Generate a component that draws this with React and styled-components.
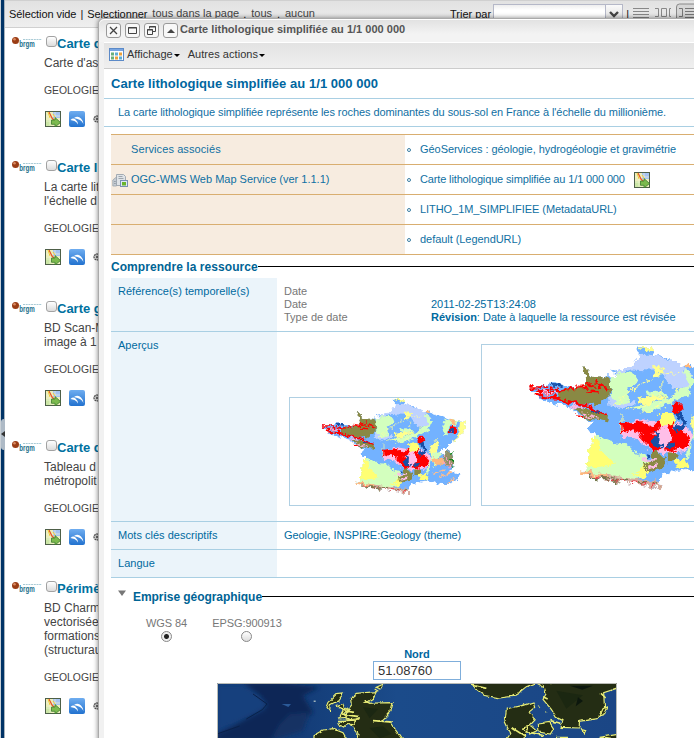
import React from 'react';
import styled, { createGlobalStyle } from 'styled-components';

const Global = createGlobalStyle`
  * { box-sizing: border-box; }
  body { margin: 0; background: #fff; overflow: hidden; font: 11px/13px "Liberation Sans", Arial, sans-serif; color: #444; }
  svg { display: block; flex: none; }
`;

const Screen = styled.div`
  position: relative; width: 694px; height: 738px; overflow: hidden; display: flex; background: #fff;
`;
const Splitter = styled.div`
  width: 5px; flex: none; display: flex; align-items: center; padding-top: 130px;
  background: linear-gradient(to right, #c9d0d6 1px, #003366 1px, #003366 4px, #a9b4bd 4px);
`;
const Handle = styled.div`
  width: 4px; height: 31px; margin-left: 1px; background: #aebac6; border-radius: 3px 0 0 3px;
  display: flex; align-items: center; z-index: 1;
`;
const Results = styled.div`flex: 1; min-width: 0; display: flex; flex-direction: column;`;
const TopBar = styled.div`
  height: 28px; flex: none; display: flex; align-items: flex-start; white-space: nowrap; color: #111;
  background: linear-gradient(#e2e2e2, #efefef); border-top: 1px solid #d0d0d0; border-bottom: 1px solid #d0d0d0;
  padding: 7px 0 0 4px;
`;
const BarText = styled.span`
  margin-left: ${p => p.$gap || 0}px; margin-top: ${p => (p.$link ? -1 : 0)}px; color: ${p => (p.$link ? '#444' : '#111')};
  letter-spacing: ${p => (p.$link ? 0 : -0.08)}px;
`;
const SortLabel = styled.span`margin-left: auto;`;
const Combo = styled.div`
  width: 130px; height: 22px; margin: -4px 3px 0 2px; border: 1px solid #b5b8c8; display: flex; justify-content: flex-end;
  background: linear-gradient(#eee, #fff 5px);
`;
const ComboButton = styled.div`width: 17px; border-left: 1px solid #b5b8c8; background: linear-gradient(#fafafa, #d5d5d5); padding: 5px 0 0 3px;`;
const ViewModes = styled.div`display: flex; margin: -5px 0 0 4px; gap: 5px; width: 61px; overflow: hidden;`;

const ResultList = styled.div`width: 100px; padding-top: 8px;`;
const Item = styled.div`height: ${p => p.$h}px; padding-left: 7px; display: flex; align-items: flex-start;`;
const ItemBody = styled.div`margin-left: 1px; white-space: nowrap;`;
const ItemTitle = styled.div`display: flex; height: 15px; font: bold 13px/15px "Liberation Sans", Arial, sans-serif; color: #0071a0;`;
const CheckBox = styled.div`
  width: 11px; height: 11px; margin: 0 0 0 2px; border: 1px solid #a2a2a2; border-radius: 3px;
  background: linear-gradient(#fff, #dcdcdc);
`;
const ItemText = styled.div`font-size: 12px; line-height: 14px; margin-top: 5px; white-space: pre;`;
const Category = styled.div`font-size: 10.4px; line-height: 13px; margin-top: 14px;`;
const ItemIcons = styled.div`display: flex; align-items: center; gap: 8px; margin: 14px 0 0 1px;`;

const Panel = styled.div`
  position: absolute; left: 98px; top: 18px; width: 640px; height: 760px; color: #0066a0;
  border: 1px solid #aaa; border-radius: 6px 0 0 0; background: #f1f1f1; box-shadow: 0 0 5px rgba(0,0,0,.5);
  padding-left: 5px; display: flex; flex-direction: column;
`;
const PanelHeader = styled.div`
  height: 23px; margin-left: -5px; flex: none; display: flex; align-items: flex-start; gap: 4px; padding: 3px 0 0 7px;
  border-top: 1px solid #fff; border-radius: 6px 0 0 0; background: linear-gradient(#e2e2e2, #f3f3f3 14px); font-weight: bold; color: #555;
`;
const ToolButton = styled.div`
  width: 15px; height: 15px; border: 1px solid #999; border-radius: 3px; background: #f8f8f8;
  display: flex; align-items: center; justify-content: center;
`;
const PanelTitle = styled.div`margin-left: -2px; letter-spacing: .02px;`;
const ActionBar = styled.div`
  height: 27px; flex: none; display: flex; align-items: center; border-top: 1px solid #fff; border-bottom: 1px solid #ccc;
  background: linear-gradient(#e3e3e3, #efefef); color: #333; padding: 0 0 3px 5px;
`;
const MenuItem = styled.div`display: flex; align-items: center; gap: 2px; margin: 0 8px 0 3px;`;
const SecondMenu = styled(MenuItem)`margin-left: 0; letter-spacing: .05px;`;
const Caret = styled.i`border: 3px solid transparent; border-top-color: #000; border-bottom: 0; margin-top: 2px; margin-left: -1px;`;
const Body = styled.div`flex: 1; background: #fff; padding-left: 7px;`;
const RecordTitle = styled.h1`
  margin: 0 0 0 -7px; padding-left: 7px; height: 30px; font-size: 13px; line-height: 30px; border-bottom: 1px solid #a9cfe3; letter-spacing: .045px;
`;
const Abstract = styled.p`
  margin: 0 0 7px -7px; padding-left: 14px; height: 28px; line-height: 26px; border-bottom: 1px solid #a9cfe3;
  color: #116fa3; letter-spacing: -.07px; white-space: nowrap;
`;

const Services = styled.div`border-top: 1px solid #d9ae70;`;
const ServiceRow = styled.div`height: 30px; display: flex; border-bottom: 1px solid #d9ae70; color: #0f70a3;`;
const ServiceName = styled.div`width: 294px; background: #f7ece0; display: flex; align-items: center; padding-left: 1px; gap: 3px; letter-spacing: ${p => p.$spacing || 0}px;`;
const IconSlot = styled.div`width: 16px; height: 14px;`;
const ServiceValue = styled.div`display: flex; align-items: center; padding-left: 2px; gap: 9px; letter-spacing: ${p => p.$spacing}px;`;
const Bullet = styled.i`width: 4px; height: 4px; border: 1px solid #3d7fa3; border-radius: 2px; margin-top: 1px;`;

const Section = styled.div`
  display: flex; height: ${p => p.$h}px; line-height: ${p => p.$h + 2}px; font-size: 12px; font-weight: bold; color: #006495;
  padding-left: ${p => p.$indent || 0}px; white-space: nowrap; letter-spacing: ${p => p.$spacing}px;
`;
const SectionArrow = styled.svg`margin: 12px 7px 0 0;`;
const Rule = styled.i`flex: 1; height: 1px; background: #000; margin-top: ${p => p.$top}px;`;
const FieldRow = styled.div`display: flex; height: ${p => p.$h}px; border-bottom: 1px solid #a9cfe3;`;
const FieldLabel = styled.div`width: 166px; flex: none; background: #ebf4fa; padding: 7px; color: #006aa0; letter-spacing: .02px;`;
const FieldValue = styled.div`padding: 7px; color: #006aa0; letter-spacing: ${p => p.$spacing || 0}px;`;
const Pair = styled.div`display: flex;`;
const PairName = styled.div`width: 147px; color: #777; flex: none;`;
const Thumbs = styled.div`display: flex; align-items: flex-end; gap: 10px; padding: 0 0 15px 12px;`;
const Thumb = styled.div`width: ${p => p.$w}px; height: ${p => p.$h}px; border: 1px solid #b0d0e3; flex: none;`;

const Projections = styled.div`display: flex; gap: 25px; color: #777; padding: 3px 0 0 35px; height: 34px;`;
const Choice = styled.div`display: flex; flex-direction: column; align-items: center; gap: 1px; letter-spacing: -.07px;`;
const Radio = styled.i`
  width: 11px; height: 11px; border-radius: 50%; border: 1px solid #888;
  background: ${p => (p.$on ? 'radial-gradient(circle, #222 2px, #eee 3px)' : 'linear-gradient(#fff, #ddd)')};
`;
const Extent = styled.div`width: 400px; margin-left: 106px; display: flex; flex-direction: column; align-items: center;`;
const NorthLabel = styled.b`color: #0066a0; line-height: 13px;`;
const NorthInput = styled.div`width: 88px; height: 19px; border: 1px solid #7faedb; padding-left: 4px; font-size: 13px; line-height: 18px; color: #333; margin-bottom: 3px;`;

function ServiceMapIcon() {
  return (
    <svg width="16" height="16" viewBox="0 0 16 16">
      <rect x=".5" y=".5" width="15" height="15" fill="#eceebb" stroke="#4d5f48" />
      <path d="M8 1h7v6H8z" fill="#a5c3f2" /><path d="M1 9h5v6H1z" fill="#cbe6a6" />
      <path d="M1 5h14M5 1v14M10 1v14M1 10h14" stroke="#f4f4d4" strokeWidth=".7" />
      <path d="M4 1l3 6 3 3" stroke="#e4572f" fill="none" strokeWidth="1.3" /><path d="M3 1l2 6M8 3l2 3" stroke="#f3ca36" />
      <path d="M6.500 9H10V6.500l5.500 5-5.500 4.500v-2.700H6.500z" fill="#7cba4e" stroke="#3b7c2c" strokeWidth=".8" />
    </svg>
  );
}
function GlobeIcon() {
  return (
    <svg width="16" height="16" viewBox="0 0 16 16">
      <defs><linearGradient id="globe" x2="0" y2="1"><stop stopColor="#6fadf0" /><stop offset="1" stopColor="#2272cf" /></linearGradient></defs>
      <rect width="16" height="16" rx="2" fill="url(#globe)" />
      <path d="M1.500 9q2.500-2.500 5-.5 2 1.500 2.500 5-1.500-3-3.500-3.500T1.500 9z" fill="#fff" />
      <path d="M5 7q4-2.500 7 .5 2 2 2.500 5.500-1.500-3-3.500-4T5 7z" fill="#fff" />
    </svg>
  );
}
function GearIcon() {
  return (
    <svg width="8" height="8" viewBox="0 0 8 8">
      <circle cx="4" cy="4" r="3" fill="#ddd" stroke="#555" strokeWidth="1.3" strokeDasharray="2 .6" /><circle cx="4" cy="4" r="1.2" fill="#666" />
    </svg>
  );
}
function BrgmLogo() {
  return (
    <svg width="31" height="16" viewBox="0 0 31 16">
      <circle cx="3.500" cy="4.500" r="3.500" fill="#9a3c14" /><circle cx="2.500" cy="3.300" r="1.300" fill="#d98a60" />
      <path d="M11 3.500h19" stroke="#a9cbd6" strokeDasharray="2 .7" />
      <text x="7.300" y="10.500" fontFamily="Liberation Sans" fontWeight="bold" fontSize="9.500" textLength="15.500" lengthAdjust="spacingAndGlyphs" fill="#1c6f8b">brgm</text>
    </svg>
  );
}
function ServerIcon() {
  return (
    <svg width="16" height="14" viewBox="0 0 16 14">
      <path d="M4.500 1.500h7l2 2v9h-9z" fill="#dfe3e7" stroke="#a3abb3" /><path d="M.8 7l3.700-3v9H.8z" fill="#c6ccd3" stroke="#9aa4ad" strokeWidth=".8" />
      <path d="M6.500 3.500h4M6.500 5.500h5M2 8.500h1.800M2 10.500h1.800" stroke="#8b959e" strokeWidth=".8" /><rect x="8.500" y="7.500" width="7" height="6" fill="#dce8f7" stroke="#7890b2" />
      <rect x="10" y="9" width="4" height="3.500" fill="#69b42d" />
    </svg>
  );
}

const OUTLINE = 'M345 27L375 28 378 42 400 47 430 65 450 57 452 68 490 78 525 92 560 95 548 125 541 140 515 158 482 185 490 193 510 180 521 198 520 215 522 235 512 242 543 253 535 268 500 287 475 280 455 272 425 278 410 275 395 283 388 292 392 308 375 310 340 300 300 295 260 290 240 283 232 276 243 268 248 240 250 207 262 212 245 190 250 180 228 165 215 155 225 152 180 142 140 130 145 122 132 112 120 109 165 104 175 99 215 108 240 104 240 90 228 70 247 70 246 82 262 86 300 85 292 78 335 65 345 50z';

function Geology({ id, width, height, view }) {
  return (
    <svg width={width} height={height} viewBox={view}>
      <defs>
        <filter id={id} x="-5%" y="-5%" width="110%" height="110%" colorInterpolationFilters="sRGB">
          <feTurbulence type="fractalNoise" baseFrequency=".075" numOctaves="4" seed="11" />
          <feDisplacementMap in="SourceGraphic" scale="19" xChannelSelector="R" yChannelSelector="G" />
        </filter>
        <clipPath id={`${id}c`}><path d={OUTLINE} /></clipPath>
      </defs>
      <g filter={`url(#${id})`}>
        <g clipPath={`url(#${id}c)`}>
          <path d={OUTLINE} fill="#73b2ff" />
          <path d="M280 90L345 50 378 42 430 62 452 85 445 108 418 116 390 75 330 72z" fill="#bed2ff" />
          <path d="M285 125L310 122 340 140 310 152 290 145z" fill="#bed2ff" />
          <path d="M345 45L380 44 430 64 448 84 436 108 412 112 410 80 380 62 350 65z" fill="#bed2ff" />
          <path d="M288 85L315 76 335 80 342 98 322 112 330 135 300 142 290 122zM437 72L457 92 446 120 412 140 380 152 350 158 330 148 380 140 420 120 446 105zM495 85L530 92 545 95 510 108 502 135 488 130z" fill="#d3ffbe" />
          <path d="M372 66L388 64 400 78 386 80 388 90 372 92 380 82zM345 130L372 122 400 130 370 142 350 144zM345 22L376 22 377 36 352 32zM545 95L565 90 546 142 520 158 538 130zM455 165L480 148 472 180 460 200 450 185z" fill="#ffff8c" />
          <path d="M360 118L390 112 402 128 380 126z" fill="#d3ffbe" />
          <path d="M244 200L290 215 318 218 340 240 364 248 360 285 325 296 232 284z" fill="#d3ffbe" />
          <path d="M246 200L262 212 272 235 298 260 286 266 240 270zM330 283L350 278 366 256 376 262 355 290z" fill="#ffff73" />
          <path d="M462 190L482 185 476 215 465 235 452 210 450 245 440 250 445 215z" fill="#d3ffbe" />
          <path d="M388 160L410 155 420 170 415 195 405 225 390 210zM418 255L438 250 448 270 420 272z" fill="#ffff73" />
          <path d="M308 185L350 172 388 178 410 190 432 176 452 200 447 235 405 240 375 238 350 215 315 207z" fill="#ffbee8" />
          <path d="M455 210L475 202 500 215 490 224 462 224zM445 57L452 70 435 66zM505 88L530 95 518 102z" fill="#ffb87d" />
          <path d="M222 66L250 66 246 84 278 80 290 100 288 122 266 140 242 143 210 137 180 130 182 115 242 104z" fill="#898944" />
          <path d="M218 150L260 154 286 166 284 176 238 170zM372 235L400 248 392 270 364 278 358 262 372 256zM404 238L424 240 420 255 404 258z" fill="#898944" />
          <path d="M488 190L512 184 524 208 515 235 497 225z" fill="#929266" />
          <path d="M232 276L330 291 390 298 392 312 230 290z" fill="#d8ae9e" />
        </g>
        <g fill="none">
          <path d="M295 145L320 125 350 100 388 82 425 78M320 155L360 145 390 130 390 95M310 160v50M430 110L400 138 350 160M450 172L475 144" stroke="#ffff9c" strokeWidth="2" strokeDasharray="20 4" />
          <path d="M124 108L160 108 190 114 225 108 260 104 285 110M140 117L175 120M240 114L270 117" stroke="#f00" strokeWidth="4.500" strokeDasharray="26 4 12 5" />
          <path d="M135 124L180 130 210 139 248 148 282 165" stroke="#f00" strokeWidth="6" />
          <path d="M145 115L190 116M220 166L240 169M225 103L262 99" stroke="#f00" strokeWidth="4" strokeDasharray="12 5" />
          <path d="M172 103L195 105M250 154L270 158" stroke="#174fa5" strokeWidth="4" />
          <path d="M230 160L265 170M150 119L180 119M210 145L235 151" stroke="#ffb6df" strokeWidth="3" />
          <path d="M240 280L280 293 318 294M335 298L385 306" stroke="#f03b4a" strokeWidth="3" strokeDasharray="12 6" />
          <path d="M268 288L325 293M250 288L310 298M350 299L390 302" stroke="#75794d" strokeWidth="3" strokeDasharray="16 5" />
          <path d="M230 279L280 286" stroke="#ffb87d" strokeWidth="5" />
        </g>
        <path d="M310 182L350 178 375 188 388 174 394 184 372 200 382 216 392 230 374 237 362 222 350 208 345 196 330 192 312 204zM402 184L414 180 420 195 432 190 446 210 447 231 430 228 415 236 398 232 410 210zM508 118L522 107 534 110 528 126 507 130z" fill="#f00" />
        <path d="M418 155L430 152 440 190 425 198 418 190 430 181zM374 195L388 200 387 218 396 225 378 230 368 215 379 207zM408 214L422 222 416 230 402 226zM514 118L524 117 522 125 510 128zM360 240L370 243 363 251z" fill="#174fa5" />
        <path d="M413 142L432 140 434 155 424 160 414 156z" fill="#f00" />
        <path d="M512 190L519 190M511 211L523 210M516 232L521 233" stroke="#11861c" strokeWidth="6" />
        <path d="M493 196L506 210M510 215L508 235M489 215L500 223" stroke="#ff9eca" strokeWidth="4" />
        <path d="M460 250L495 240M475 262L520 246M500 282L525 264" stroke="#ffbd8d" strokeWidth="4" />
        <path d="M350 255L382 254M365 270L383 264" stroke="#ffbee8" strokeWidth="5" />
      </g>
    </svg>
  );
}

function SatelliteMap() {
  return (
    <svg width="400" height="56" viewBox="22 127 1200 168">
      <defs>
        <filter id="coast" x="-5%" y="-5%" width="110%" height="110%" colorInterpolationFilters="sRGB">
          <feTurbulence type="fractalNoise" baseFrequency=".04" numOctaves="3" seed="3" />
          <feDisplacementMap in="SourceGraphic" scale="12" xChannelSelector="R" yChannelSelector="G" />
        </filter>
        <filter id="seabed"><feGaussianBlur stdDeviation="7" /></filter>
        <linearGradient id="sea"><stop stopColor="#123b78" /><stop offset=".2" stopColor="#133c77" /><stop offset=".45" stopColor="#1b4b8a" /><stop offset="1" stopColor="#1b4685" /></linearGradient>
      </defs>
      <rect x="22" y="127" width="1200" height="168" fill="url(#sea)" />
      <g filter="url(#seabed)">
        <path d="M100 125L210 125 330 140 280 165 310 215 250 270 180 300 22 300 22 280 80 250 165 205 150 165z" fill="#0d2857" />
        <path d="M22 132L95 132 150 165 172 192 150 210 80 245 22 270z" fill="#17417d" />
        <path d="M240 220L300 215 280 270 180 300 210 250z" fill="#123064" />
      </g>
      <path d="M130 160L172 190 158 207 110 235M22 280L90 256" stroke="#0a2149" strokeWidth="3" fill="none" />
      <path d="M216 190h28l-8 9z" fill="#2b5a98" />
      <path d="M312 180h6v3h-6z" fill="#e5eddb" />
      <g filter="url(#coast)" fill="#242d14" stroke="#e9ed77" strokeWidth="3.500">
        <path d="M440 158L500 153 490 172 465 188 550 186 544 210 520 236 508 242 540 244 565 278 580 300 440 300 445 278 432 260 415 250 425 238 408 230 412 210 428 190 425 170z" />
        <path d="M358 185L382 162 400 160 385 180 362 192 360 210 352 200zM380 194L400 188 404 204 418 202 402 220 412 230 390 232 400 212zM385 248L410 238 448 234 430 252 412 250 402 262 388 255z" />
        <path d="M310 285L340 268 370 264 400 276 414 300 310 300zM500 140L522 130 514 145zM495 145L506 152" />
        <path d="M785 120L800 145 824 164 870 172 908 167 930 154 950 138 976 128 980 120zM980 127L1004 140 1009 160 1000 176 1025 206 1040 230 1060 240 1054 260 1108 262 1110 242 1165 234 1185 205 1182 156 1230 140 1230 120z" />
        <path d="M890 205L940 194 970 184 975 200 958 214 976 238 955 260 940 300 890 300 904 280 886 242zM938 262L966 255 982 270 960 280zM986 250L1020 245 1032 263 1022 280 988 274zM1112 266L1128 270 1124 277zM1170 226L1180 204 1192 198 1182 222zM1170 290L1230 280 1230 300zM985 195L992 205M1004 218L1009 215M1040 290h35" />
        <path d="M390 205L430 212M395 220L445 228M385 240L452 238M1174 158L1188 172M1000 168L1014 175M1022 240L1052 248M905 260L945 286M965 276L1000 285M465 180L478 190M785 130L830 140M490 240L550 244" fill="none" strokeWidth="5" />
      </g>
      <g fill="#192611" opacity=".8"><path d="M460 200l45 5-25 28zM480 262l40-5 25 23-35 13zM1040 150l80 14-50 40z" /><path d="M1105 170l15 11-22 16zM1080 135h70l-32 12z" fill="#07120c" /></g>
      <path d="M23.500 295V128.500H1220.500V295" fill="none" stroke="#b9bbb6" strokeWidth="3" />
    </svg>
  );
}

const records = [
  { title: 'Carte d', text: "Carte d'as", h: 124 },
  { title: 'Carte l', text: "La carte lit\nl'échelle d", h: 141 },
  { title: 'Carte g', text: 'BD Scan-M\nimage à 1', h: 139 },
  { title: 'Carte d', text: 'Tableau d\nmétropolit', h: 141 },
  { title: 'Périmè', text: 'BD Charm\nvectorisée\nformations\n(structurau', h: 150 },
];

const services = [
  { name: 'Services associés', nameSpacing: 0.1, value: 'GéoServices : géologie, hydrogéologie et gravimétrie', spacing: -0.05 },
  { name: 'OGC-WMS Web Map Service (ver 1.1.1)', server: true, value: 'Carte lithologique simplifiée au 1/1 000 000', spacing: -0.14, map: true },
  { name: '', value: 'LITHO_1M_SIMPLIFIEE (MetadataURL)', spacing: -0.06 },
  { name: '', value: 'default (LegendURL)', spacing: -0.05 },
];

export default function App() {
  return (
    <Screen>
      <Global />
      <Splitter><Handle><svg width="4" height="6"><path d="M4 0v6L0 3z" fill="#333" /></svg></Handle></Splitter>
      <Results>
        <TopBar>
          <BarText>Sélection vide</BarText><BarText $gap={4}>|</BarText><BarText $gap={4}>Selectionner</BarText>
          <BarText $link $gap={5}>tous dans la page</BarText><BarText $gap={4}>,</BarText>
          <BarText $link $gap={5}>tous</BarText><BarText $gap={5}>,</BarText><BarText $link $gap={5}>aucun</BarText>
          <SortLabel>Trier par</SortLabel>
          <Combo><ComboButton><svg width="10" height="8"><path d="M1 2l4 4 4-4" stroke="#444" strokeWidth="2.4" fill="none" /></svg></ComboButton></Combo>
          <span>|</span>
          <ViewModes>
            <svg width="17" height="18"><path d="M0 5.500h16M0 8.500h16M0 11.500h16M0 14.500h16" stroke="#888" /></svg>
            <svg width="16" height="18"><path d="M0 5.500h3.500v8H0M6.500 5.500h5v8h-5zM16 5.500h-1.500v8h1.500" fill="none" stroke="#888" /></svg>
            <svg width="20" height="18"><path d="M.5 18V4q0-3 3-3H20v17z" fill="#d6d6d6" stroke="#888" /><path d="M3 5.500h3.500v8H3M9 5.500h10M9 8.500h10M9 11.500h10M9 14.500h10" fill="none" stroke="#777" /></svg>
          </ViewModes>
        </TopBar>
        <ResultList>
          {records.map(r => (
            <Item key={r.text} $h={r.h}>
              <BrgmLogo />
              <ItemBody>
                <ItemTitle><CheckBox />{r.title}</ItemTitle>
                <ItemText>{r.text}</ItemText>
                <Category>GEOLOGIE</Category>
                <ItemIcons><ServiceMapIcon /><GlobeIcon /><GearIcon /></ItemIcons>
              </ItemBody>
            </Item>
          ))}
        </ResultList>
      </Results>

      <Panel>
        <PanelHeader>
          <ToolButton><svg width="9" height="9"><path d="M1 1l7 7M8 1L1 8" stroke="#444" strokeWidth="1.3" /></svg></ToolButton>
          <ToolButton><svg width="9" height="9"><path d="M.5 1.500h8v6h-8zM0 2h9" fill="none" stroke="#444" /></svg></ToolButton>
          <ToolButton><svg width="11" height="11"><path d="M6.500 6.500h3v-5h-6v2M3 2h7M1.500 4.500h5v5h-5zM1 5h6" fill="none" stroke="#444" /></svg></ToolButton>
          <ToolButton><svg width="8" height="8"><path d="M0 6l4-4 4 4z" fill="#444" /></svg></ToolButton>
          <PanelTitle>Carte lithologique simplifiée au 1/1 000 000</PanelTitle>
        </PanelHeader>
        <ActionBar>
          <svg width="15" height="13"><rect x=".5" y=".5" width="14" height="12" fill="#fff" stroke="#5c8ac8" /><path d="M1 2h13" stroke="#78a5e2" strokeWidth="2" /><path d="M2 6h3M2 10h3" stroke="#69af7b" strokeWidth="3" /><path d="M6 6h3M10 10h3" stroke="#60aed5" strokeWidth="3" /><path d="M6 10h3M10 6h3" stroke="#eba03b" strokeWidth="3" /></svg>
          <MenuItem>Affichage<Caret /></MenuItem>
          <SecondMenu>Autres actions<Caret /></SecondMenu>
        </ActionBar>
        <Body>
          <RecordTitle>Carte lithologique simplifiée au 1/1 000 000</RecordTitle>
          <Abstract>La carte lithologique simplifiée représente les roches dominantes du sous-sol en France à l'échelle du millionième.</Abstract>
          <Services>
            {services.map(s => (
              <ServiceRow key={s.value}>
                <ServiceName $spacing={s.nameSpacing}><IconSlot>{s.server && <ServerIcon />}</IconSlot>{s.name}</ServiceName>
                <ServiceValue $spacing={s.spacing}><Bullet />{s.value}{s.map && <ServiceMapIcon />}</ServiceValue>
              </ServiceRow>
            ))}
          </Services>
          <Section $h={23} $spacing={0.06}>Comprendre la ressource<Rule $top={11} /></Section>
          <FieldRow $h={54}>
            <FieldLabel>Référence(s) temporelle(s)</FieldLabel>
            <FieldValue>
              <Pair><PairName>Date</PairName></Pair>
              <Pair><PairName>Date</PairName>2011-02-25T13:24:08</Pair>
              <Pair><PairName>Type de date</PairName><span><b>Révision</b>: Date à laquelle la ressource est révisée</span></Pair>
            </FieldValue>
          </FieldRow>
          <FieldRow $h={190}>
            <FieldLabel>Aperçus</FieldLabel>
            <Thumbs>
              <Thumb $w={182} $h={109}><Geology id="geoSmall" width="180" height="107" view="31 24 540 321" /></Thumb>
              <Thumb $w={272} $h={162}><Geology id="geoLarge" width="270" height="160" view="32 23 540 321" /></Thumb>
            </Thumbs>
          </FieldRow>
          <FieldRow $h={28}><FieldLabel>Mots clés descriptifs</FieldLabel><FieldValue $spacing={-0.06}>Geologie, INSPIRE:Geology (theme)</FieldValue></FieldRow>
          <FieldRow $h={28}><FieldLabel>Langue</FieldLabel></FieldRow>
          <Section $h={36} $indent={7} $spacing={-0.05}>
            <SectionArrow width="8" height="6"><path d="M0 .5h8L4 6z" fill="#777" /></SectionArrow>
            Emprise géographique<Rule $top={18} />
          </Section>
          <Projections>
            <Choice>WGS 84<Radio $on /></Choice>
            <Choice>EPSG:900913<Radio /></Choice>
          </Projections>
          <Extent>
            <NorthLabel>Nord</NorthLabel>
            <NorthInput>51.08760</NorthInput>
            <SatelliteMap />
          </Extent>
        </Body>
      </Panel>
    </Screen>
  );
}
